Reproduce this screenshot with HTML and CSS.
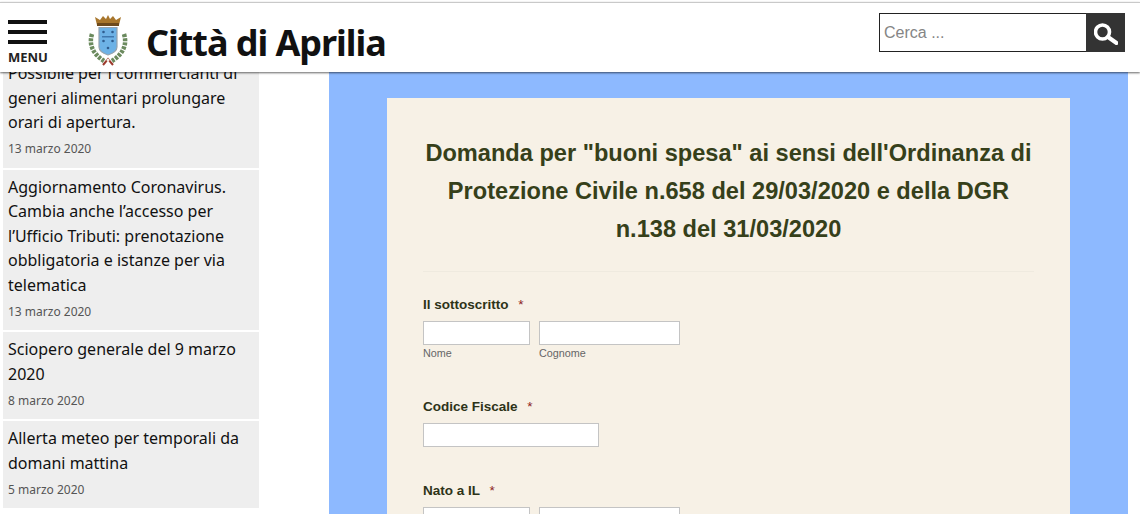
FILE: index.html
```html
<!DOCTYPE html>
<html lang="it">
<head>
    <meta charset="UTF-8">
    <meta name="viewport" content="width=device-width, initial-scale=1.0">
    <title>Città di Aprilia</title>
    <link rel="stylesheet" href="styles.css">
</head>
<body>
    <header class="topbar">
        <div class="menu">
            <span class="menu-bar"></span>
            <span class="menu-bar"></span>
            <span class="menu-bar"></span>
            <span class="menu-label">MENU</span>
        </div>
        <svg class="crest" viewBox="0 0 40 52" width="40" height="52">
            <path d="M9 11 L7 3 L12 6 L15 2 L18 5 L20 1 L22 5 L25 2 L28 6 L33 3 L31 11 Z" fill="#a8762c"/>
            <rect x="9" y="9" width="22" height="3" fill="#6e4a1c"/>
            <path d="M11 13.500 H29 V33 Q29 38 20 41 Q11 38 11 33 Z" fill="#6db2e6" stroke="#97a3ad" stroke-width="1.200"/>
            <g fill="#2f5d8f">
                <circle cx="15.500" cy="18" r="1.300"/>
                <circle cx="24.500" cy="18" r="1.300"/>
                <circle cx="15.500" cy="27" r="1.300"/>
                <circle cx="24.500" cy="27" r="1.300"/>
                <circle cx="20" cy="34" r="1.300"/>
            </g>
            <rect x="14" y="22" width="12" height="1.500" fill="#3f77ad"/>
            <path d="M4 20 Q-1 36 16 47" fill="none" stroke="#6b8a5e" stroke-width="4.500" stroke-dasharray="3 1.200"/>
            <path d="M36 20 Q41 36 24 47" fill="none" stroke="#6b8a5e" stroke-width="4.500" stroke-dasharray="3 1.200"/>
            <path d="M15 51 L20 45 L25 51" fill="none" stroke="#9c3a2c" stroke-width="2"/>
            <circle cx="20" cy="46" r="1.500" fill="#f3e9e2"/>
        </svg>
        <div class="site-name">Città di Aprilia</div>
        <form class="search">
            <input class="search-input" type="text" placeholder="Cerca ...">
            <button class="search-btn" type="button">
                <svg viewBox="0 0 24 24" width="24" height="24">
                    <circle cx="8.500" cy="11" r="7" fill="none" stroke="#fff" stroke-width="3.600"/>
                    <path d="M14 16 L22.500 22" stroke="#fff" stroke-width="4" stroke-linecap="round"/>
                </svg>
            </button>
        </form>
    </header>

    <div class="page">
        <aside class="news">
            <div class="news-item news-item-cut">
                <a class="news-title">Possibile per i commercianti di generi alimentari prolungare orari di apertura.</a>
                <div class="news-date">13 marzo 2020</div>
            </div>
            <div class="news-item">
                <a class="news-title">Aggiornamento Coronavirus. Cambia anche l’accesso per l’Ufficio Tributi: prenotazione obbligatoria e istanze per via telematica</a>
                <div class="news-date">13 marzo 2020</div>
            </div>
            <div class="news-item">
                <a class="news-title">Sciopero generale del 9 marzo 2020</a>
                <div class="news-date">8 marzo 2020</div>
            </div>
            <div class="news-item">
                <a class="news-title">Allerta meteo per temporali da domani mattina</a>
                <div class="news-date">5 marzo 2020</div>
            </div>
        </aside>

        <main class="form-wrap">
            <div class="form-card">
                <h1 class="form-title">Domanda per "buoni spesa" ai sensi dell'Ordinanza di Protezione Civile n.658 del 29/03/2020 e della DGR n.138 del 31/03/2020</h1>
                <hr class="form-rule">

                <div class="field">
                    <label class="field-label">Il sottoscritto <span class="req">*</span></label>
                    <div class="field-row">
                        <div>
                            <input class="txt txt-first" type="text">
                            <div class="sublabel">Nome</div>
                        </div>
                        <div>
                            <input class="txt txt-last" type="text">
                            <div class="sublabel">Cognome</div>
                        </div>
                    </div>
                </div>

                <div class="field field-cf">
                    <label class="field-label">Codice Fiscale <span class="req">*</span></label>
                    <input class="txt txt-cf" type="text">
                </div>

                <div class="field field-born">
                    <label class="field-label">Nato a IL <span class="req">*</span></label>
                    <div class="field-row">
                        <input class="txt txt-first" type="text">
                        <input class="txt txt-last" type="text">
                    </div>
                </div>
            </div>
        </main>
    </div>
</body>
</html>
```

FILE: styles.css
```css
html, body {
    margin: 0;
    padding: 0;
    height: 514px;
    overflow: hidden;
    background: #fff;
}
body {
    font-family: "Liberation Sans", Arial, sans-serif;
    color: #333;
}

/* header */
.topbar {
    position: relative;
    z-index: 5;
    height: 69px;
    margin-top: 2px;
    border-top: 1px solid #c9c9c9;
    background: #fff;
    box-shadow: 0 1px 2px rgba(0, 0, 0, 0.6);
    display: flex;
    align-items: flex-start;
}
.menu {
    width: 39px;
    margin: 17px 0 0 8px;
}
.menu-bar {
    display: block;
    height: 4px;
    background: #111;
    margin-bottom: 6px;
}
.menu-label {
    display: block;
    margin-top: 6px;
    font-family: "Noto Sans", sans-serif;
    font-size: 13px;
    font-weight: 700;
    line-height: 14px;
    color: #222;
}
.crest {
    margin: 11px 0 0 41px;
}
.site-name {
    margin: 17px 0 0 18px;
    font-family: "Noto Sans", sans-serif;
    font-size: 36px;
    font-weight: 700;
    line-height: 46px;
    color: #111;
    letter-spacing: -1.050px;
}
.search {
    margin: 10px 15px 0 auto;
    display: flex;
    height: 39px;
}
.search-input {
    box-sizing: border-box;
    width: 207px;
    height: 39px;
    padding: 0 4px;
    border: 1px solid #222;
    border-right: none;
    font-family: "Liberation Sans", Arial, sans-serif;
    font-size: 16px;
    outline: none;
}
.search-input::placeholder {
    color: #858585;
}
.search-btn {
    width: 39px;
    height: 39px;
    padding: 0;
    border: none;
    background: #333;
    display: flex;
    align-items: center;
    justify-content: center;
}

/* page */
.page {
    display: flex;
    align-items: flex-start;
}

/* left news list */
.news {
    width: 256px;
    margin-left: 3px;
    overflow: hidden;
}
.news-item {
    background: #eee;
    padding: 5px 5px 8.800px;
    margin-bottom: 2px;
}
/* the list is scrolled: the first line runs under the header */
.news-item-cut {
    margin-top: -16px;
}
.news-title {
    display: block;
    font-family: "Noto Sans", sans-serif;
    font-size: 16px;
    line-height: 24.600px;
    color: #111;
}
.news-date {
    margin-top: 4px;
    font-family: "Noto Sans", sans-serif;
    font-size: 12px;
    line-height: 20px;
    color: #555;
}

/* form */
.form-wrap {
    width: 799px;
    height: 442px;
    margin-left: 70px;
    padding: 26px 58px 0;
    box-sizing: border-box;
    background: #8db9ff;
    overflow: hidden;
}
.form-card {
    box-sizing: border-box;
    width: 683px;
    height: 500px;
    padding: 36px 36px 0;
    background: #f7f1e6;
}
.form-title {
    margin: 0;
    font-size: 23.600px;
    line-height: 38px;
    font-weight: 700;
    text-align: center;
    color: #36401a;
}
.form-rule {
    margin: 23px 0 0;
    border: none;
    border-top: 1px solid #efeadf;
}
.field {
    margin-top: 25px;
}
.field-cf {
    margin-top: 39px;
}
.field-born {
    margin-top: 36px;
}
.field-label {
    display: block;
    font-size: 13.500px;
    line-height: 16px;
    font-weight: 700;
    color: #2d3318;
    margin-bottom: 8px;
}
.req {
    margin-left: 6px;
    font-weight: 400;
    color: #8a2020;
}
.field-row {
    display: flex;
    gap: 9px;
}
.txt {
    display: block;
    box-sizing: border-box;
    height: 24px;
    border: 1px solid #c4c4c4;
    background: #fff;
    outline: none;
}
.txt-first {
    width: 107px;
}
.txt-last {
    width: 141px;
}
.txt-cf {
    width: 176px;
}
.sublabel {
    margin-top: 1px;
    font-size: 10.800px;
    line-height: 14px;
    color: #666;
}
```
